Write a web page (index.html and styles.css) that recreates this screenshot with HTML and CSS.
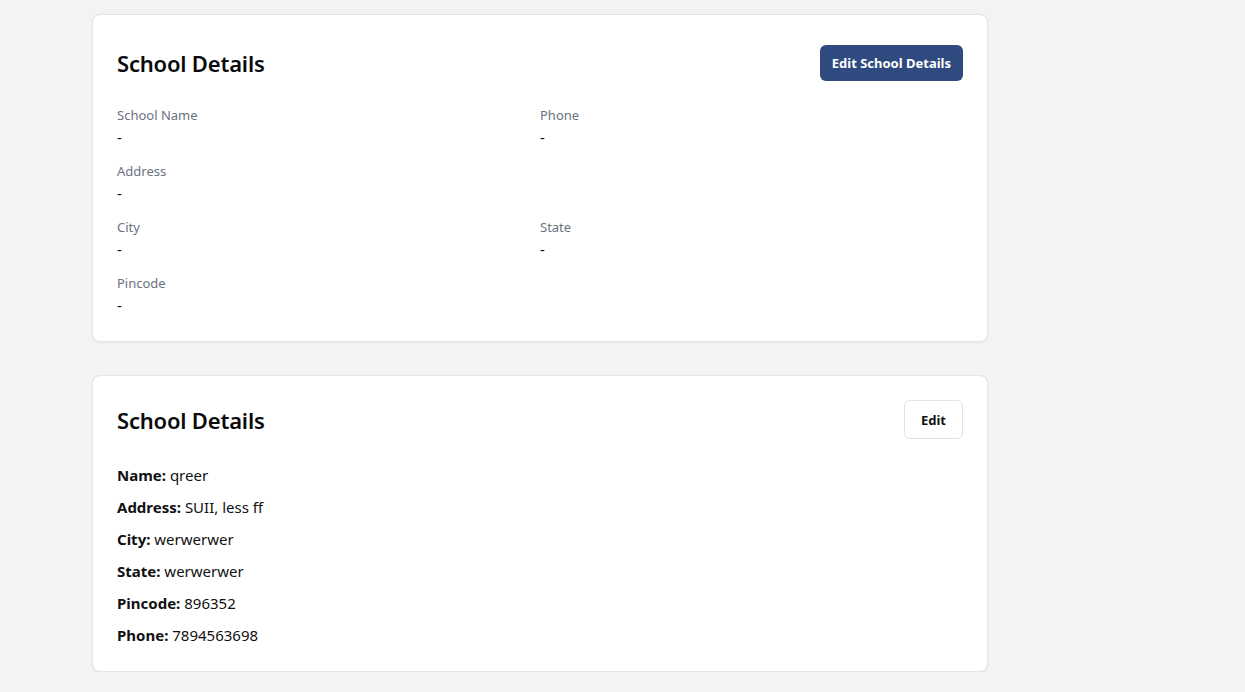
FILE: index.html
```html
<!DOCTYPE html>
<html lang="en">
<head>
<meta charset="utf-8">
<title>School Details</title>
<link rel="stylesheet" href="styles.css">
</head>
<body>
<main class="page">
  <section class="card card-grid">
    <div class="card-header">
      <h2 class="card-title">School Details</h2>
      <button class="btn btn-primary">Edit School Details</button>
    </div>
    <div class="field-grid">
      <div class="field"><div class="field-label">School Name</div><div class="field-value">-</div></div>
      <div class="field"><div class="field-label">Phone</div><div class="field-value">-</div></div>
      <div class="field field-full"><div class="field-label">Address</div><div class="field-value">-</div></div>
      <div class="field"><div class="field-label">City</div><div class="field-value">-</div></div>
      <div class="field"><div class="field-label">State</div><div class="field-value">-</div></div>
      <div class="field"><div class="field-label">Pincode</div><div class="field-value">-</div></div>
    </div>
  </section>

  <section class="card card-list">
    <div class="card-header">
      <h2 class="card-title">School Details</h2>
      <button class="btn btn-outline">Edit</button>
    </div>
    <div class="detail-list">
      <p class="detail"><strong>Name:</strong> qreer</p>
      <p class="detail"><strong>Address:</strong> SUII, less ff</p>
      <p class="detail"><strong>City:</strong> werwerwer</p>
      <p class="detail"><strong>State:</strong> werwerwer</p>
      <p class="detail"><strong>Pincode:</strong> 896352</p>
      <p class="detail"><strong>Phone:</strong> 7894563698</p>
    </div>
  </section>
</main>
</body>
</html>
```

FILE: styles.css
```css
* { box-sizing: border-box; }

html, body {
  margin: 0;
  padding: 0;
  background: #f3f3f3;
  font-family: "Noto Sans", "Open Sans", "Liberation Sans", sans-serif;
  color: #111;
}

.page {
  padding: 14px 0 0 92px;
  width: 988px;
  display: flex;
  flex-direction: column;
  gap: 33px;
}

.card {
  background: #fff;
  border: 1px solid #e4e4e4;
  border-radius: 8px;
  box-shadow: 0 1px 2px rgba(0,0,0,0.05);
  padding: 24px 24px 24px;
}

.card-grid { padding-top: 30px; }

.card-header {
  display: flex;
  align-items: center;
  justify-content: space-between;
  height: 36px;
  margin-bottom: 24px;
}

.card-list .card-header {
  height: 39px;
  margin-bottom: 24px;
}

.card-title {
  margin: 0;
  font-size: 22px;
  font-weight: 600;
  letter-spacing: -0.2px;
  color: #0b0b0b;
}

.btn {
  font-family: inherit;
  font-size: 13px;
  font-weight: 700;
  border-radius: 6px;
  cursor: pointer;
}

.btn-primary {
  height: 36px;
  padding: 0 12px;
  background: #2f4a7e;
  color: #fff;
  border: none;
}

.btn-outline {
  height: 39px;
  padding: 0 16px;
  background: #fff;
  color: #111;
  border: 1px solid #e3e3e3;
}

.field-grid {
  display: grid;
  grid-template-columns: 1fr 1fr;
  row-gap: 12px;
}

.field-full { grid-column: 1 / 2; grid-row: 2; }
.field-grid .field:nth-child(4) { grid-row: 3; grid-column: 1; }
.field-grid .field:nth-child(5) { grid-row: 3; grid-column: 2; }
.field-grid .field:nth-child(6) { grid-row: 4; grid-column: 1; }

.field-label {
  font-size: 13px;
  line-height: 20px;
  color: #6b7280;
}

.field-value {
  font-size: 15px;
  line-height: 24px;
  color: #111;
}

.detail-list {
  display: flex;
  flex-direction: column;
  gap: 8px;
}

.detail {
  margin: 0;
  font-size: 15px;
  line-height: 24px;
  color: #111;
}

.detail strong { font-weight: 700; }
```
